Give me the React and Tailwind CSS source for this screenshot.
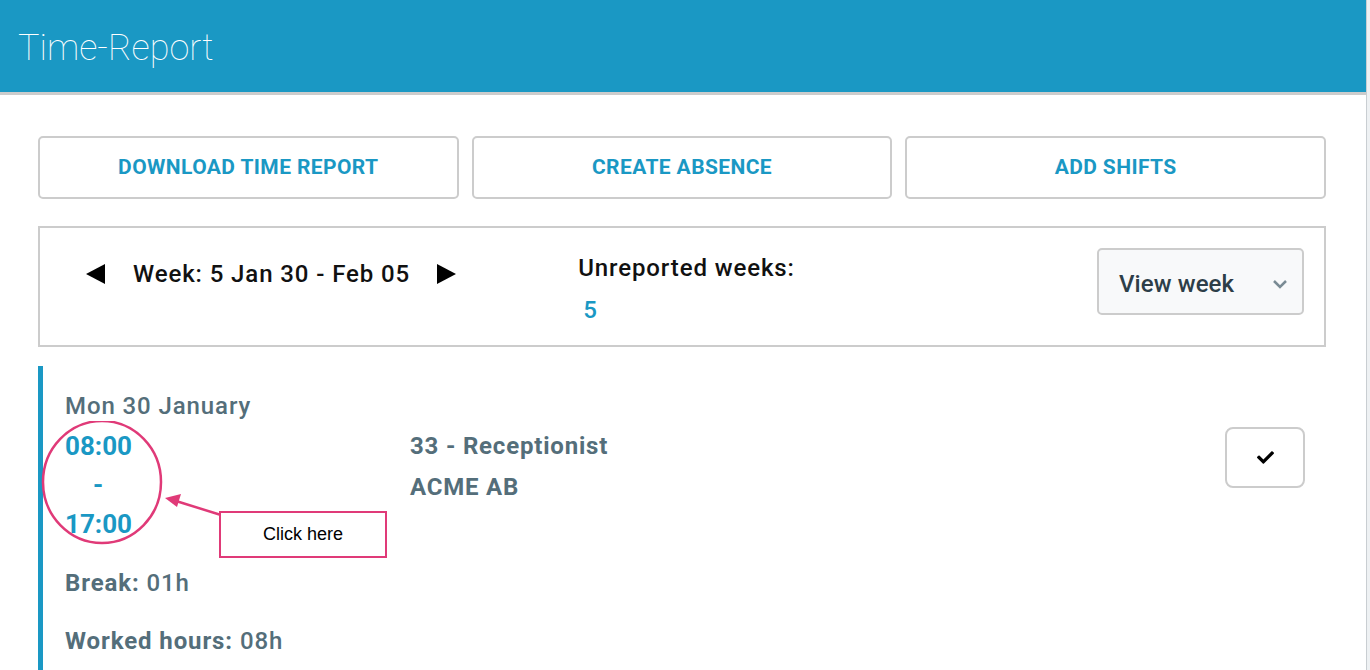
import { FaCheck } from 'react-icons/fa';

const font = { fontFamily: 'Roboto, "Liberation Sans", sans-serif' };

const ActionButton = ({ label }) => (
    <button className="h-[63px] rounded-[5px] border-2 border-[#cccccc] bg-white text-[21px] font-bold tracking-[0.4px] text-[#1a98c4]">
        {label}
    </button>
);

const Triangle = ({ dir }) => (
    <svg width="19" height="20" viewBox="0 0 19 20">
        {dir === 'left'
            ? <polygon points="19,0 19,20 0,10" fill="#000" />
            : <polygon points="0,0 0,20 19,10" fill="#000" />}
    </svg>
);

export default function App() {
    return (
        <div className="flex h-[670px] w-[1370px] overflow-hidden bg-white" style={font}>
            <div className="w-[1366px]">
                <header className="h-[92px] bg-[#1a98c4] pl-[18px] pt-[27px]">
                    <h1 className="text-[36px] font-thin leading-[42px] text-white">Time-Report</h1>
                </header>
                <div className="h-[3px] bg-[#cccccc]" />

                <main className="pl-[38px] pr-[40px] pt-[41px]">
                    <div className="grid grid-cols-3 gap-[13px]">
                        <ActionButton label="DOWNLOAD TIME REPORT" />
                        <ActionButton label="CREATE ABSENCE" />
                        <ActionButton label="ADD SHIFTS" />
                    </div>

                    <div className="mt-[27px] flex h-[121px] items-start border-2 border-[#cccccc] pl-[46px] pr-[20px] pt-[20px]">
                        <div className="mt-[8px] flex items-center">
                            <Triangle dir="left" />
                            <span className="ml-[28px] text-[24px] font-medium tracking-[0.9px] text-[#111]">Week: 5 Jan 30 - Feb 05</span>
                            <span className="ml-[27px]"><Triangle dir="right" /></span>
                        </div>
                        <div className="ml-[122px] mt-[4px]">
                            <div className="text-[24px] font-medium leading-[32px] tracking-[0.9px] text-[#111]">Unreported weeks:</div>
                            <div className="mt-[10px] pl-[5px] text-[24px] font-medium leading-[32px] text-[#1a98c4]">5</div>
                        </div>
                        <div className="ml-auto flex h-[67px] w-[207px] items-center justify-between rounded-[5px] border-2 border-[#cccccc] bg-[#f8f9fa] pl-[20px] pr-[14px] pt-[4px]">
                            <span className="text-[24px] font-medium tracking-[0.1px] text-[#2d3e48]">View week</span>
                            <svg width="16" height="10" viewBox="0 0 16 10">
                                <polyline points="2,2 8,8 14,2" fill="none" stroke="#7a8b94" strokeWidth="2.5" />
                            </svg>
                        </div>
                    </div>

                    <div className="relative mt-[19px] flex border-l-[5px] border-[#1a98c4] pb-[40px] pl-[22px] pt-[25px]">
                        <div className="w-[345px] text-[#546e7a]">
                            <div className="text-[24px] font-medium leading-[30px] tracking-[0.9px]">Mon 30 January</div>
                            <div className="w-[66px] text-center text-[26px] font-bold leading-[39px] text-[#1a98c4]">
                                <div className="mt-[6px]">08:00</div>
                                <div>-</div>
                                <div>17:00</div>
                            </div>
                            <div className="mt-[24px] text-[24px] font-medium leading-[30px] tracking-[0.9px]"><span className="font-bold">Break:</span> 01h</div>
                            <div className="mt-[28px] text-[24px] font-medium leading-[30px] tracking-[0.9px]"><span className="font-bold">Worked hours:</span> 08h</div>
                        </div>
                        <div className="pt-[35px] text-[24px] font-bold leading-[41px] tracking-[0.8px] text-[#546e7a]">
                            <div>33 - Receptionist</div>
                            <div>ACME AB</div>
                        </div>
                        <div className="ml-auto mr-[21px] pt-[36px]">
                            <button className="flex h-[61px] w-[80px] items-center justify-center rounded-[8px] border-2 border-[#cccccc] bg-white">
                                <FaCheck className="h-[17px] w-[17px] text-black" />
                            </button>
                        </div>

                        <svg className="pointer-events-none absolute left-[-2px] top-[55px]" width="360" height="160" viewBox="0 0 360 160">
                            <ellipse cx="61" cy="61" rx="59" ry="61" fill="none" stroke="#e03a78" strokeWidth="2.5" />
                            <line x1="180" y1="94" x2="135" y2="80" stroke="#e03a78" strokeWidth="2.5" />
                            <polygon points="124,77 140,73 136,86" fill="#e03a78" />
                        </svg>
                        <div className="absolute left-[176px] top-[145px] flex h-[47px] w-[168px] items-center justify-center border-2 border-[#e03a78] bg-white text-[18px] text-black" style={{ fontFamily: '"Liberation Sans", Arial, sans-serif' }}>
                            Click here
                        </div>
                    </div>
                </main>
            </div>
            <div className="w-[4px] border-l border-[#c9ced2] bg-[#eef1f3]" />
        </div>
    );
}
